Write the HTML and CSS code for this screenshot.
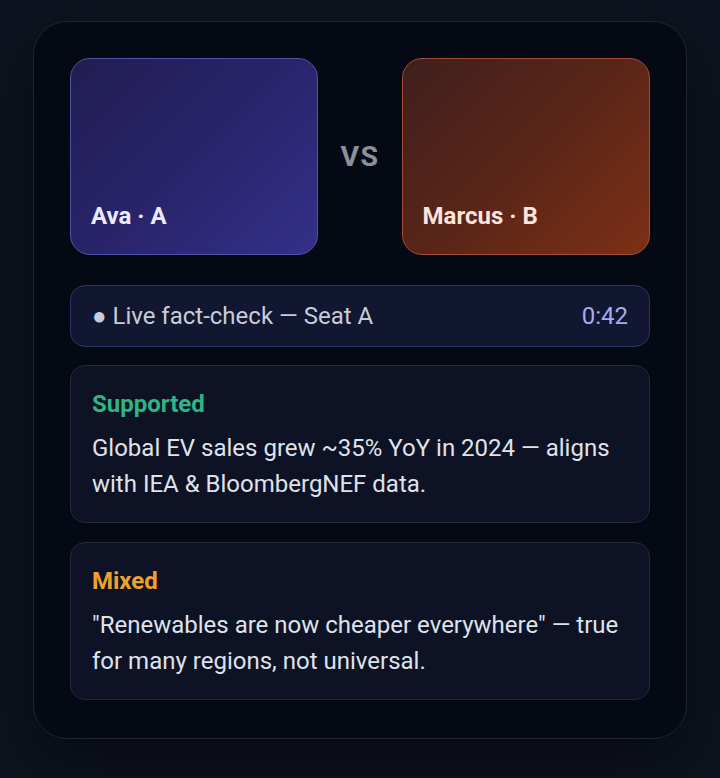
FILE: index.html
```html
<!DOCTYPE html>
<html lang="en">
<head>
<meta charset="utf-8">
<link rel="stylesheet" href="styles.css">
</head>
<body>
<main class="card">
  <section class="players">
    <div class="player player-a"><span class="name">Ava · A</span></div>
    <div class="vs">VS</div>
    <div class="player player-b"><span class="name">Marcus · B</span></div>
  </section>
  <div class="status">
    <span class="status-label">● Live fact-check — Seat A</span>
    <span class="timer">0:42</span>
  </div>
  <article class="claim">
    <h3 class="verdict verdict-supported">Supported</h3>
    <p class="claim-text">Global EV sales grew ~35% YoY in 2024 — aligns with IEA &amp; BloombergNEF data.</p>
  </article>
  <article class="claim">
    <h3 class="verdict verdict-mixed">Mixed</h3>
    <p class="claim-text">"Renewables are now cheaper everywhere" — true for many regions, not universal.</p>
  </article>
</main>
</body>
</html>
```
FILE: styles.css
```css
* { box-sizing: border-box; }
html, body { margin: 0; }
body {
  min-height: 778px;
  background: #0e131f;
  font-family: Roboto, "Noto Sans", sans-serif;
  padding-top: 21px;
}
.card {
  width: 654px;
  margin: 0 auto;
  background: #050914;
  border: 1px solid #1d2433;
  border-radius: 34px;
  padding: 36px 36px 38px;
  display: flex;
  flex-direction: column;
  gap: 18px;
  box-shadow: 0 24px 60px rgba(0, 0, 0, 0.45);
}
.players {
  display: grid;
  grid-template-columns: 1fr auto 1fr;
  align-items: center;
  column-gap: 22px;
  margin-bottom: 12px;
}
.player {
  height: 197px;
  border-radius: 20px;
  display: flex;
  align-items: flex-end;
  padding: 0 20px 26px;
}
.player-a {
  background: linear-gradient(135deg, #211d52 0%, #29246a 50%, #34308a 100%);
  border: 1.5px solid #4f53a8;
}
.player-b {
  background: linear-gradient(135deg, #40201d 0%, #5a2518 50%, #7d3015 100%);
  border: 1.5px solid #a24c3c;
}
.name {
  font-size: 24px;
  font-weight: 700;
  line-height: 1;
}
.player-a .name { color: #ebeafd; }
.player-b .name { color: #fde4de; }
.vs {
  font-size: 28.5px;
  font-weight: 700;
  color: #8a909c;
  letter-spacing: 1.5px;
}
.status {
  height: 62px;
  background: #111731;
  border: 1.5px solid #2b3463;
  border-radius: 15px;
  display: flex;
  align-items: center;
  justify-content: space-between;
  padding: 0 21px;
  font-size: 24px;
}
.status-label { color: #c8ccd8; }
.timer { color: #a3adf0; }
.claim {
  background: #0d1324;
  border: 1.5px solid #232a3b;
  border-radius: 15px;
  padding: 24px 21px 20px;
}
.claim + .claim { margin-top: 1px; }
.verdict {
  margin: 0 0 12px;
  font-size: 24px;
  font-weight: 700;
  line-height: 28px;
}
.verdict-supported { color: #2db584; }
.verdict-mixed { color: #eea12d; }
.claim-text {
  margin: 0;
  font-size: 24px;
  line-height: 36px;
  color: #dfe2ec;
}
```
